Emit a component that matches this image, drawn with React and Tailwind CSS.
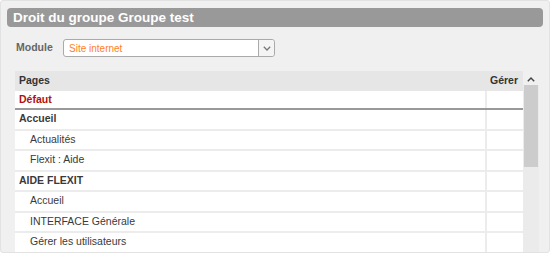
import React from "react";

const rows = [
  { label: "Accueil", kind: "group" },
  { label: "Actualités", kind: "page" },
  { label: "Flexit : Aide", kind: "page" },
  { label: "AIDE FLEXIT", kind: "group" },
  { label: "Accueil", kind: "page" },
  { label: "INTERFACE Générale", kind: "page" },
  { label: "Gérer les utilisateurs", kind: "page" },
  { label: "", kind: "page" },
];

const App = () => {
  return (
    <div
      className="w-[550px] h-[253px] overflow-hidden bg-[#f0f0f0] border border-[#e2e2e2] rounded-[3px] relative"
      style={{ fontFamily: '"Liberation Sans", Arial, sans-serif' }}
    >
      {/* Title */}
      <div className="mx-[6px] mt-[7px] h-[19px] rounded-[4px] bg-[#999999] flex items-center pl-[6px]">
        <span className="text-white font-bold text-[13.5px] leading-none">Droit du groupe Groupe test</span>
      </div>

      {/* Module select */}
      <div className="flex items-center mt-[12px] pl-[15px] h-[18px]">
        <span className="text-[#666] font-bold text-[10.5px] w-[47px]">Module</span>
        <div className="w-[212px] h-[18px] bg-white border border-[#aaaaaa] rounded-[3px] flex items-center">
          <span className="flex-1 pl-[5px] text-[10px] text-[#ff7f1f]">Site internet</span>
          <div className="w-[16px] h-full border-l border-[#aaaaaa] bg-[#f4f4f4] rounded-r-[3px] flex items-center justify-center">
            <svg width="8" height="5" viewBox="0 0 8 5">
              <path d="M0.8 0.8 L4 4 L7.2 0.8" fill="none" stroke="#777" strokeWidth="1.3" />
            </svg>
          </div>
        </div>
      </div>

      {/* Table */}
      <div className="flex ml-[14px] mt-[14px] w-[524px]">
        <div className="w-[508px]">
          <div className="flex h-[20px] bg-[#e6e6e6] items-center text-[10.5px] font-bold text-[#333]">
            <div className="flex-1 pl-[4px]">Pages</div>
            <div className="w-[38px] text-right pr-[5px]">Gérer</div>
          </div>
          <div className="flex h-[19px] bg-white items-center border-b-2 border-[#999999] text-[10.5px] font-bold text-[#b01010]">
            <div className="flex-1 pl-[4px] h-full flex items-center">Défaut</div>
            <div className="w-[38px] h-full border-l-2 border-[#ececec]" />
          </div>
          {rows.map((r, i) => (
            <div key={i} className="flex h-[20.5px] bg-white border-b-2 border-[#ececec] text-[10.5px] text-[#3a3a3a]">
              <div
                className={
                  r.kind === "group"
                    ? "flex-1 pl-[4px] flex items-center font-bold"
                    : "flex-1 pl-[15px] flex items-center"
                }
              >
                {r.label}
              </div>
              <div className="w-[38px] h-full border-l-2 border-[#ececec]" />
            </div>
          ))}
        </div>

        {/* Scrollbar */}
        <div className="w-[16px] flex flex-col">
          <div className="h-[14px] flex items-center justify-center pt-[2px]">
            <svg width="8" height="5" viewBox="0 0 8 5">
              <path d="M0.8 4.2 L4 1 L7.2 4.2" fill="none" stroke="#444" strokeWidth="1.4" />
            </svg>
          </div>
          <div className="flex-1 bg-[#ebebeb] px-[1px]">
            <div className="h-[82px] bg-[#cccccc]" />
          </div>
        </div>
      </div>
    </div>
  );
};

export default App;
